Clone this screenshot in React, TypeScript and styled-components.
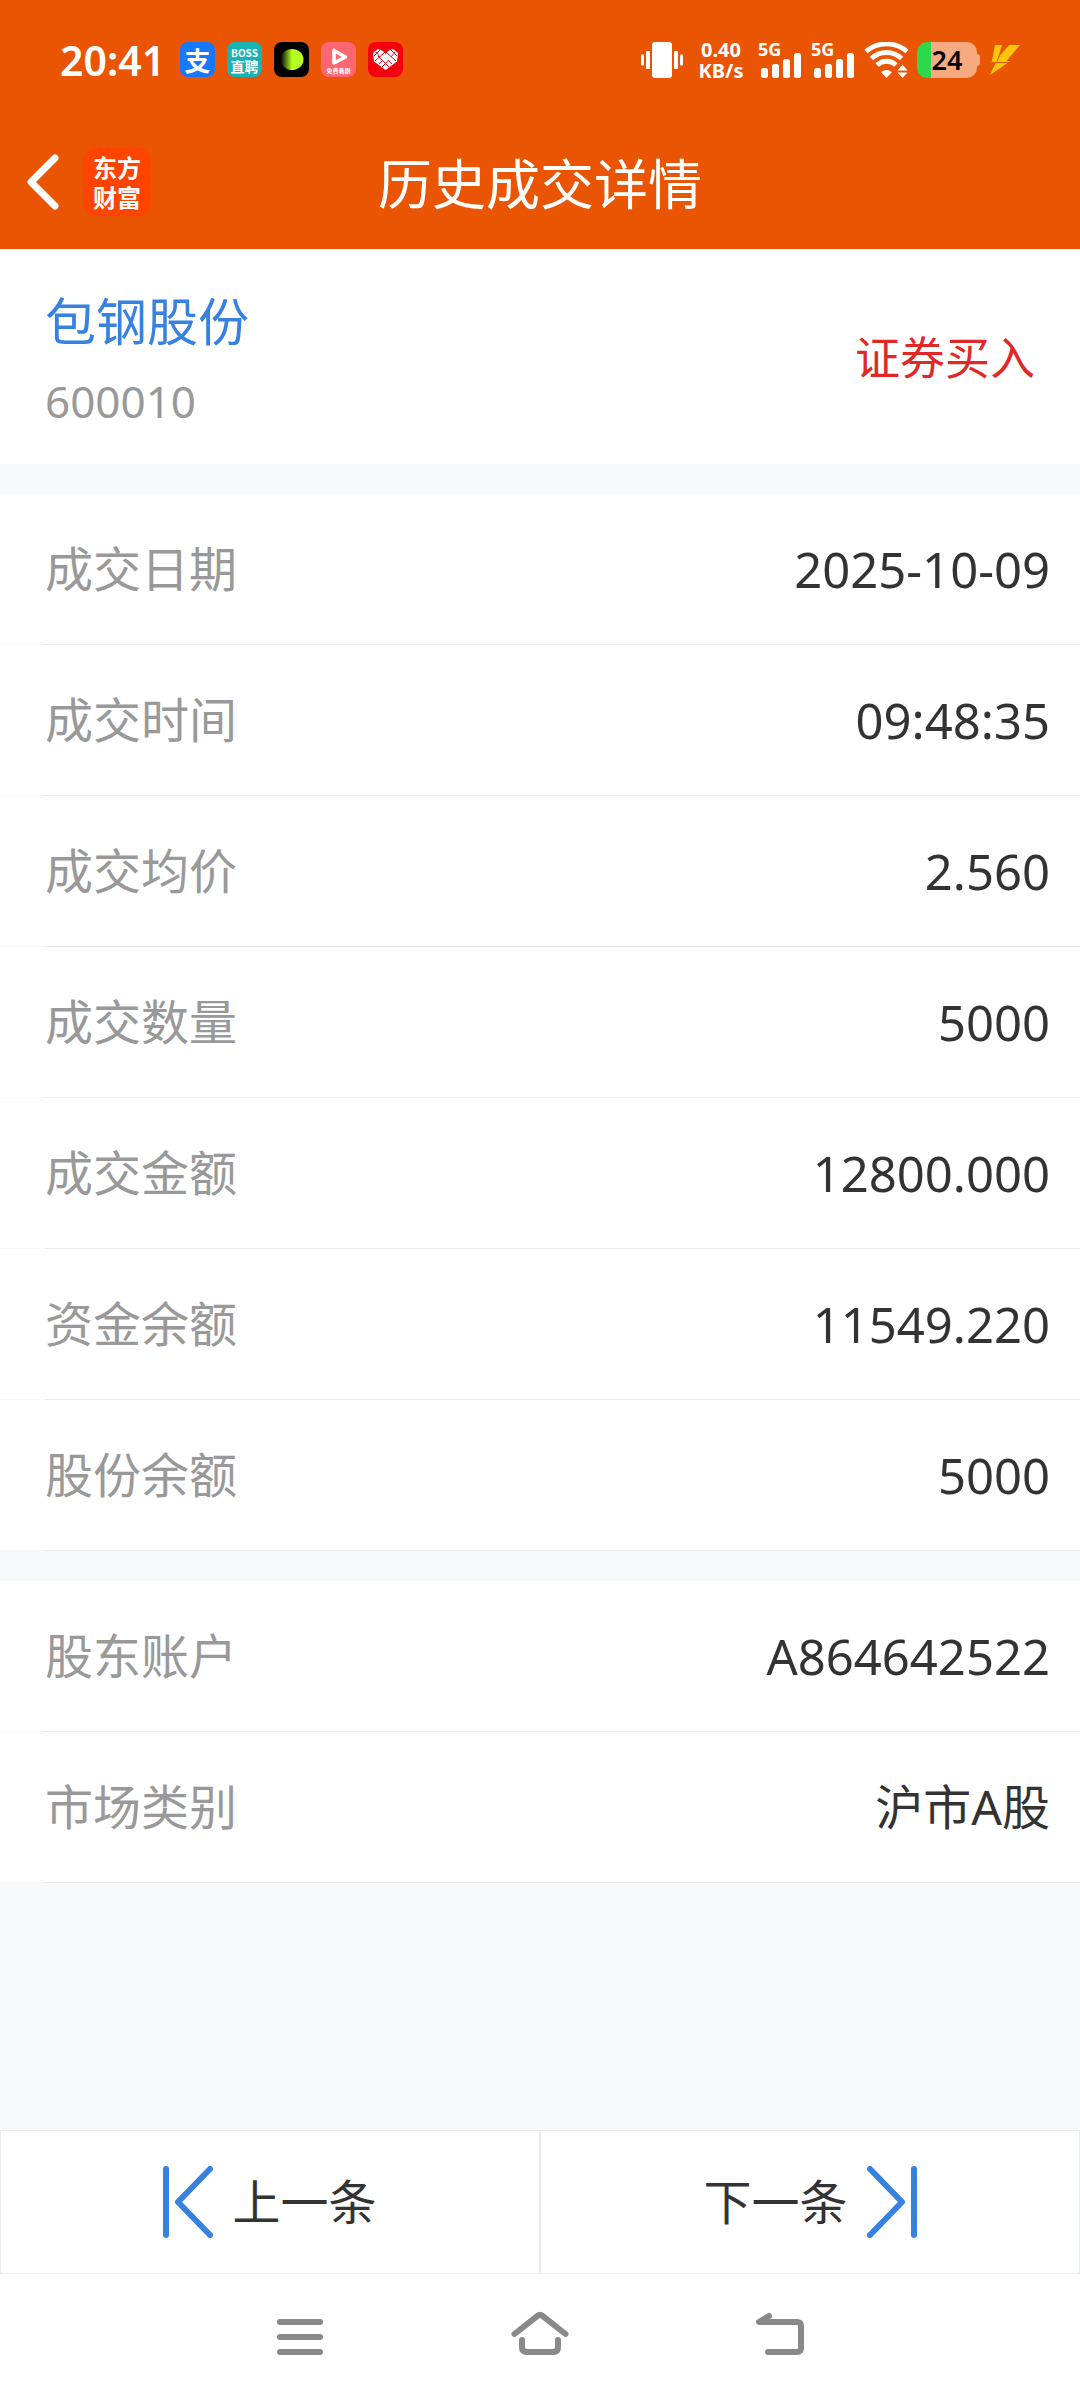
import React from "react";
import styled, { createGlobalStyle } from "styled-components";

const GlobalStyle = createGlobalStyle`
  * { box-sizing: border-box; }
  body {
    margin: 0;
    background: #f6f8fa;
    color: #333333;
    font-family: "Noto Sans", "Noto Sans CJK SC", sans-serif;
  }
  button { font: inherit; color: inherit; background: none; border: 0; padding: 0; cursor: pointer; }
  svg { display: block; flex: none; }
`;

const Page = styled.div`
  min-height: 100vh;
  display: flex;
  flex-direction: column;
`;

/* Status bar */

const StatusBar = styled.div`
  display: flex;
  align-items: center;
  justify-content: space-between;
  height: 119px;
  padding: 0 60px;
  background: #ea5504;
  color: #ffffff;
`;

const StatusGroup = styled.div<{ $gap: number }>`
  display: flex;
  align-items: center;
  gap: ${(p) => p.$gap}px;
`;

const Clock = styled.time`
  width: 108px;
  font-size: 41px;
  line-height: 48px;
  font-weight: 600;
`;

const AppBadge = styled.span<{ $color: string }>`
  display: flex;
  flex-direction: column;
  align-items: center;
  justify-content: center;
  width: 35px;
  height: 35px;
  border-radius: 8px;
  background: ${(p) => p.$color};
`;

const BadgeText = styled.span<{ $size: number; $line: number }>`
  font-family: "Noto Sans CJK SC", sans-serif;
  font-weight: 700;
  font-size: ${(p) => p.$size}px;
  line-height: ${(p) => p.$line}px;
  white-space: nowrap;
`;

const Speed = styled.span`
  display: flex;
  flex-direction: column;
  align-items: center;
  width: 58px;
  font-weight: 700;
  font-size: 20px;
  line-height: 21px;
`;

const Signal = styled.span`
  display: grid;
  width: 45px;
  height: 36px;
`;

const SignalText = styled.span`
  grid-area: 1 / 1;
  font-weight: 700;
  font-size: 18px;
  line-height: 14px;
`;

const SignalBars = styled.svg`
  grid-area: 1 / 1;
`;

const Battery = styled.span`
  display: flex;
  align-items: center;
  width: 64px;
`;

const BatteryBody = styled.span`
  display: flex;
  align-items: center;
  justify-content: center;
  width: 60px;
  height: 36px;
  border-radius: 10px;
  background: linear-gradient(to right, #2bd94b 24%, #f7a982 24%);
  color: #000000;
  font-weight: 600;
  font-size: 27px;
  line-height: 36px;
`;

const BatteryTip = styled.span`
  width: 3px;
  height: 12px;
  border-radius: 0 3px 3px 0;
  background: #f7a982;
`;

/* Title bar */

const TitleBar = styled.header`
  display: grid;
  grid-template-columns: 1fr auto 1fr;
  align-items: center;
  height: 130px;
  background: #ea5504;
  color: #ffffff;
`;

const TitleLeft = styled.div`
  display: flex;
  align-items: center;
  gap: 24px;
  padding: 0 0 4px 26px;
`;

const BrandLogo = styled.span`
  display: flex;
  flex-direction: column;
  align-items: center;
  justify-content: center;
  width: 68px;
  height: 68px;
  border-radius: 14px;
  background: #ff4400;
  font-family: "Noto Sans CJK SC", sans-serif;
  font-weight: 700;
  font-size: 24px;
  line-height: 30px;
`;

const Title = styled.h1`
  margin: 0;
  font-weight: 400;
  font-size: 54px;
  line-height: 72px;
`;

/* Content */

const Main = styled.main`
  flex: 1;
  display: flex;
  flex-direction: column;
  gap: 30px;
`;

const StockCard = styled.section`
  display: flex;
  align-items: center;
  justify-content: space-between;
  padding: 34px 45px 31px;
  background: #ffffff;
`;

const StockName = styled.h2`
  margin: 0 0 10px;
  font-weight: 400;
  font-size: 51px;
  line-height: 76px;
  color: #3781e0;
`;

const StockCode = styled.p`
  margin: 0;
  font-size: 44px;
  line-height: 64px;
  color: #999999;
`;

const Direction = styled.strong`
  font-weight: 400;
  font-size: 45px;
  line-height: 72px;
  color: #e12828;
`;

const Details = styled.dl`
  margin: 0;
`;

const Row = styled.div`
  display: flex;
  align-items: center;
  justify-content: space-between;
  padding: 39px 30px 39px 45px;
  background: #ffffff;
  line-height: 72px;
`;

const RowLine = styled.div`
  margin-left: 45px;
  height: 1px;
  background: #ebebeb;
`;

const Label = styled.dt`
  font-size: 48px;
  color: #999999;
`;

const Value = styled.dd<{ $numeric: boolean }>`
  margin: 0;
  font-size: ${(p) => (p.$numeric ? 49 : 48)}px;
  color: #333333;
`;

/* Bottom bars */

const Pager = styled.nav`
  display: grid;
  grid-template-columns: 1fr 1fr;
  background: #ffffff;
`;

const PagerButton = styled.button`
  && {
    display: flex;
    align-items: center;
    justify-content: center;
    gap: 19px;
    height: 144px;
    border: 1px solid #e9ebed;
    font-size: 48px;
    line-height: 72px;
  }
`;

const SystemNav = styled.nav`
  display: flex;
  padding: 0 180px;
  height: 126px;
  background: #ffffff;
`;

const SystemButton = styled.button`
  flex: 1;
  display: flex;
  align-items: center;
  justify-content: center;
`;

function SignalIcon() {
  return (
    <Signal>
      <SignalText>5G</SignalText>
      <SignalBars width="45" height="36" viewBox="0 0 45 36" fill="#fff">
        <rect x="3" y="26" width="7" height="10" rx="2.5" />
        <rect x="14" y="22" width="7" height="14" rx="2.5" />
        <rect x="25" y="17" width="7" height="19" rx="2.5" />
        <rect x="36" y="11" width="7" height="25" rx="2.5" />
      </SignalBars>
    </Signal>
  );
}

function StatusIcons() {
  return (
    <StatusGroup $gap={8}>
      <svg width="43" height="36" viewBox="0 0 43 36" fill="#fff">
        <rect x="11" y="0" width="20" height="36" rx="3" />
        <rect x="0" y="12.5" width="3" height="11" rx="1" />
        <rect x="5" y="9" width="4" height="18" rx="1" />
        <rect x="33" y="9" width="4" height="18" rx="1" />
        <rect x="39" y="12.5" width="3" height="11" rx="1" />
      </svg>
      <Speed>
        <span>0.40</span>
        <span>KB/s</span>
      </Speed>
      <SignalIcon />
      <SignalIcon />
      <svg width="45" height="36" viewBox="0 0 45 36" fill="none" stroke="#fff" strokeWidth="4.8">
        <path d="M2 9.5C13.5-.6 31.500-.6 43 9.500" />
        <path d="M7.500 16.500C16 8.500 29 8.500 37.500 16.500" />
        <path d="M13 23C18.500 18 26.500 18 32 23" />
        <path d="M17 30Q22.500 26 28 30L22.500 36Z" fill="#fff" stroke="none" />
        <path d="M38.500 22.500L43.500 28.500H33.500ZM38.500 36L33.500 30.500H43.500Z" fill="#fff" stroke="none" />
      </svg>
      <Battery>
        <BatteryBody>24</BatteryBody>
        <BatteryTip />
      </Battery>
      <svg width="31" height="32" viewBox="0 0 31 32" fill="#ffc60a">
        <path d="M6 1H13L9.500 13L20 1H31L17.500 17H21.500L1 31L6.500 19H2.500Z" />
        <path d="M14.500 1L8 17.500M2.500 18.500H21" fill="none" stroke="#ea5504" strokeWidth="1" />
      </svg>
    </StatusGroup>
  );
}

function AppBadges() {
  return (
    <StatusGroup $gap={12}>
      <Clock>20:41</Clock>
      <AppBadge $color="#1677ff">
        <BadgeText $size={26} $line={35}>支</BadgeText>
      </AppBadge>
      <AppBadge $color="#19b3b3">
        <BadgeText $size={10} $line={13}>BOSS</BadgeText>
        <BadgeText $size={14} $line={15}>直聘</BadgeText>
      </AppBadge>
      <AppBadge $color="#000000">
        <svg width="35" height="35" viewBox="0 0 35 35">
          <defs>
            <linearGradient id="moon">
              <stop offset="0" stopColor="#b4ff20" stopOpacity="0" />
              <stop offset=".5" stopColor="#b4ff20" />
            </linearGradient>
          </defs>
          <ellipse cx="18" cy="17.500" rx="11.500" ry="10.500" fill="url(#moon)" />
        </svg>
      </AppBadge>
      <AppBadge $color="#fb6670">
        <svg width="35" height="23" viewBox="0 0 35 23">
          <path d="M13 6.500V19L24.500 13Z" fill="none" stroke="#fff" strokeWidth="3.600" strokeLinejoin="round" />
        </svg>
        <BadgeText $size={6} $line={8}>免费看剧</BadgeText>
      </AppBadge>
      <AppBadge $color="#f5000f">
        <svg width="35" height="35" viewBox="0 0 35 35">
          <path d="M17.500 28L6 19.500L5 11L10 7L15 9L17.500 12L20 9L25 7L30 11L29 19.500Z" fill="#fff" />
          <g fill="none" stroke="#f5000f" strokeWidth="1">
            <path d="M6 14L12 8M7 19L17 10M11 22L15 18M14 25L21 18M29 14L23 8M28 19L18 10M24 22L14 12M21 25L10 14M8 10L12 15M27 10L23 15" />
          </g>
          <rect x="15" y="12.500" width="5" height="6" fill="#fff" />
        </svg>
      </AppBadge>
    </StatusGroup>
  );
}

const tradeRows = [
  ["成交日期", "2025-10-09"],
  ["成交时间", "09:48:35"],
  ["成交均价", "2.560"],
  ["成交数量", "5000"],
  ["成交金额", "12800.000"],
  ["资金余额", "11549.220"],
  ["股份余额", "5000"],
];

const accountRows = [
  ["股东账户", "A864642522"],
  ["市场类别", "沪市A股"],
];

function DetailList({ rows }: { rows: string[][] }) {
  return (
    <Details>
      {rows.map(([label, value]) => (
        <div key={label}>
          <Row>
            <Label>{label}</Label>
            <Value $numeric={/^[\w.:-]+$/.test(value)}>{value}</Value>
          </Row>
          <RowLine />
        </div>
      ))}
    </Details>
  );
}

export default function App() {
  return (
    <Page lang="zh-CN">
      <GlobalStyle />
      <StatusBar>
        <AppBadges />
        <StatusIcons />
      </StatusBar>
      <TitleBar>
        <TitleLeft>
          <button type="button" aria-label="返回">
            <svg width="33" height="56" viewBox="0 0 33 56" fill="none" stroke="#fff" strokeWidth="7" strokeLinecap="round" strokeLinejoin="round">
              <path d="M29 4L5 28L29 52" />
            </svg>
          </button>
          <BrandLogo>
            <span>东方</span>
            <span>财富</span>
          </BrandLogo>
        </TitleLeft>
        <Title>历史成交详情</Title>
      </TitleBar>
      <Main>
        <StockCard>
          <div>
            <StockName>包钢股份</StockName>
            <StockCode>600010</StockCode>
          </div>
          <Direction>证券买入</Direction>
        </StockCard>
        <DetailList rows={tradeRows} />
        <DetailList rows={accountRows} />
      </Main>
      <Pager>
        <PagerButton type="button">
          <svg width="50" height="72" viewBox="0 0 50 72" fill="none" stroke="#3781e0" strokeWidth="6" strokeLinecap="round" strokeLinejoin="round">
            <path d="M3 3V69M47 3L15 36L47 69" />
          </svg>
          上一条
        </PagerButton>
        <PagerButton type="button">
          下一条
          <svg width="50" height="72" viewBox="0 0 50 72" fill="none" stroke="#3781e0" strokeWidth="6" strokeLinecap="round" strokeLinejoin="round">
            <path d="M47 3V69M3 3L35 36L3 69" />
          </svg>
        </PagerButton>
      </Pager>
      <SystemNav>
        <SystemButton type="button" aria-label="最近任务">
          <svg width="60" height="52" viewBox="0 0 60 52" fill="none" stroke="#898989" strokeWidth="6" strokeLinecap="round">
            <path d="M10 11H50M10 26H50M10 41H50" />
          </svg>
        </SystemButton>
        <SystemButton type="button" aria-label="主屏幕">
          <svg width="60" height="52" viewBox="0 0 60 52" fill="none" stroke="#898989" strokeWidth="6" strokeLinecap="round" strokeLinejoin="round">
            <path d="M4.500 23L27.500 4.800Q30 3 32.500 4.800L55.500 23M12 29V36Q12 41 17 41H43Q48 41 48 36V29" />
          </svg>
        </SystemButton>
        <SystemButton type="button" aria-label="返回上一页">
          <svg width="60" height="52" viewBox="0 0 60 52" fill="none" stroke="#898989" strokeWidth="6" strokeLinecap="round" strokeLinejoin="round">
            <path d="M19 5L9 11H47Q51 11 51 15V37Q51 41 47 41H18" />
          </svg>
        </SystemButton>
      </SystemNav>
    </Page>
  );
}
